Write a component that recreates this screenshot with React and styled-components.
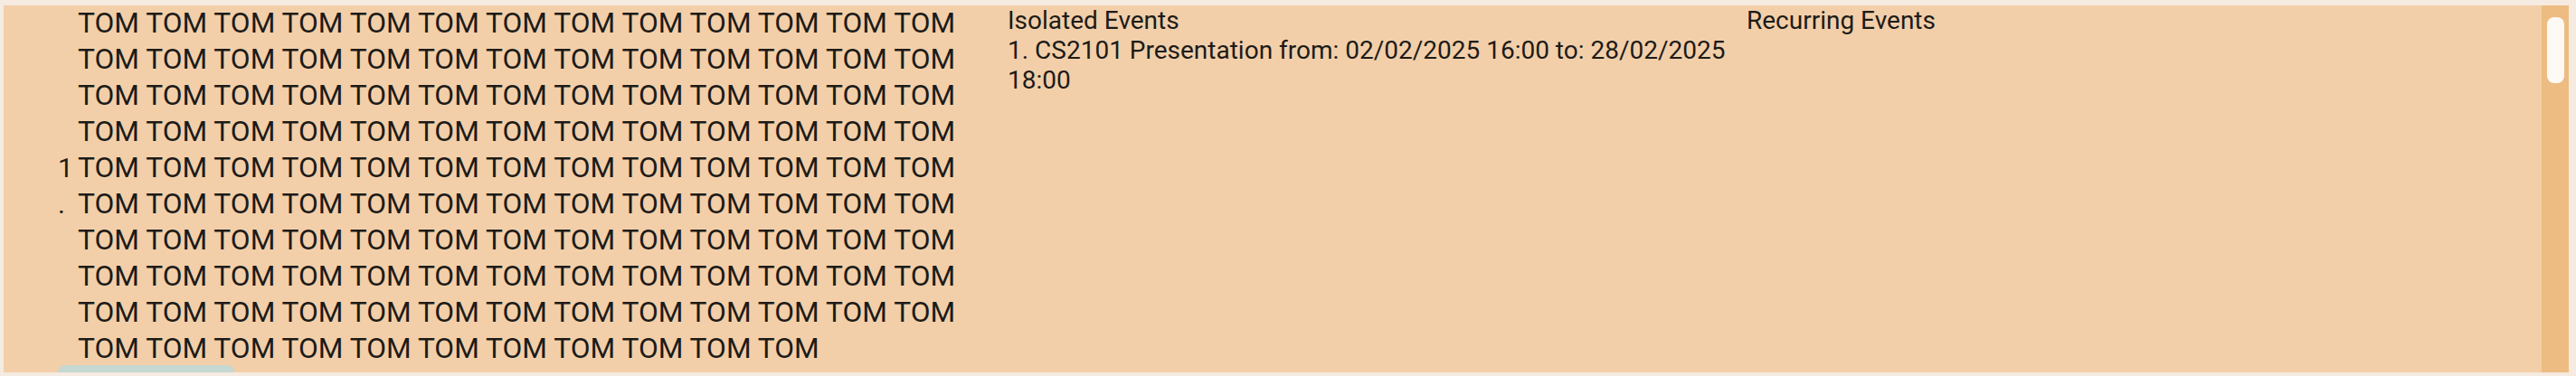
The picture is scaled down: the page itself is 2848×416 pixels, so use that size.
import React from "react";
import styled, { createGlobalStyle } from "styled-components";

const tomText = Array(128).fill("TOM").join(" ");

const tasks = [1, 2, 3, 4].map((n) => ({ id: n, text: tomText }));

const isolatedEvents = [
  "CS2101 Presentation from: 02/02/2025 16:00 to: 28/02/2025 18:00",
];

function App() {
  return (
    <>
      <GlobalStyle />
      <Page>
        <Panel>
          <Content>
            <TaskList>
              {tasks.map((task) => (
                <Task key={task.id}>
                  <TaskRow>
                    <Index>{task.id}.</Index>
                    <TaskText>{task.text}</TaskText>
                  </TaskRow>
                  <ActionButton>Delete</ActionButton>
                </Task>
              ))}
            </TaskList>
            <EventColumn>
              <Heading>Isolated Events</Heading>
              {isolatedEvents.map((ev, i) => (
                <EventItem key={i}>
                  {i + 1}. {ev}
                </EventItem>
              ))}
            </EventColumn>
            <EventColumn>
              <Heading>Recurring Events</Heading>
            </EventColumn>
          </Content>
          <ScrollTrack>
            <ScrollThumb />
          </ScrollTrack>
        </Panel>
      </Page>
    </>
  );
}

export default App;

const GlobalStyle = createGlobalStyle`
  html, body {
    margin: 0;
    padding: 0;
    background: #f5ebe0;
  }
  body {
    font-family: Roboto, "Liberation Sans", sans-serif;
    color: #1d1b18;
  }
`;

const Page = styled.div`
  box-sizing: border-box;
  height: 416px;
  padding: 6px 8px 4px 4px;
`;

const Panel = styled.div`
  display: flex;
  height: 406px;
  background: #f2cfa9;
`;

const Content = styled.div`
  flex: 1;
  overflow-y: auto;
  scrollbar-width: none;
  display: grid;
  grid-template-columns: 1110px 817px 1fr;
  align-items: start;
`;

const ScrollTrack = styled.div`
  width: 30px;
  flex-shrink: 0;
  background: #edbc82;
  padding-top: 13px;
  box-sizing: border-box;
`;

const ScrollThumb = styled.div`
  width: 19px;
  height: 73px;
  margin-left: 6px;
  border-radius: 8px;
  background: #fdfaf5;
`;

const TaskList = styled.div`
  padding-left: 60px;
`;

const Task = styled.div`
  margin-bottom: 80px;
`;

const TaskRow = styled.div`
  display: flex;
  align-items: center;
  gap: 2px;
`;

const Index = styled.div`
  width: 20px;
  font-size: 30px;
  line-height: 40px;
  overflow-wrap: anywhere;
`;

const TaskText = styled.div`
  width: 1000px;
  font-size: 31.7px;
  line-height: 40px;
`;

const ActionButton = styled.button`
  display: block;
  width: 195px;
  height: 52px;
  margin-top: -2px;
  border: none;
  border-radius: 8px;
  background: #c5d8d1;
  color: #1d1b18;
  font-family: Roboto, "Liberation Sans", sans-serif;
  font-size: 26px;
`;

const EventColumn = styled.div`
  font-size: 28px;
  line-height: 33px;
`;

const Heading = styled.div`
  font-weight: 400;
`;

const EventItem = styled.div``;
